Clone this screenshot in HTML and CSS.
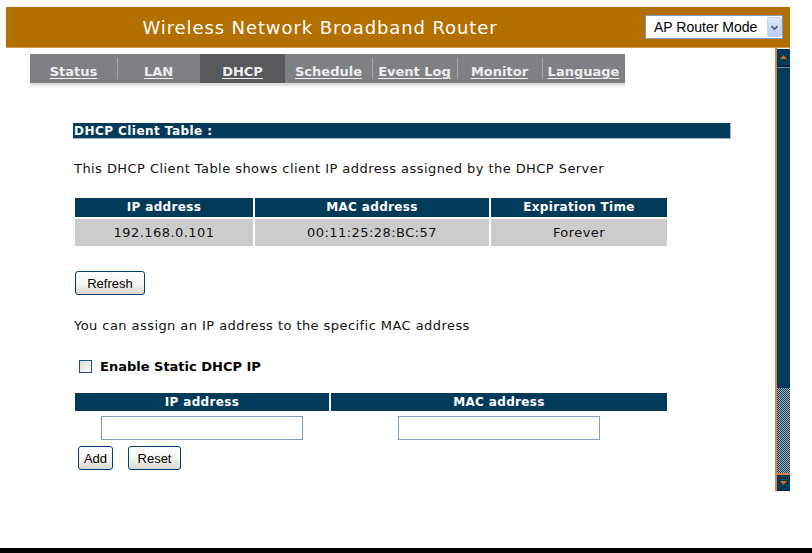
FILE: index.html
```html
<!DOCTYPE html>
<html>
<head>
<meta charset="utf-8">
<title>Wireless Network Broadband Router</title>
<link rel="stylesheet" href="styles.css">
</head>
<body>
<div class="screen">
  <div class="top">
    <div class="header">
      <div class="title">Wireless Network Broadband Router</div>
      <div class="mode">
        <select class="mode-select"><option>AP Router Mode</option></select>
        <span class="mode-arrow"><svg width="15" height="19" viewBox="0 0 15 19"><polyline points="4,8 7.5,11.5 11,8" fill="none" stroke="#4d6185" stroke-width="2"/></svg></span>
      </div>
    </div>
    <div class="frame">
      <div class="content">
        <nav class="tabs">
          <a class="tab w87">Status</a>
          <a class="tab w83">LAN</a>
          <a class="tab w85 active">DHCP</a>
          <a class="tab w87 nosep">Schedule</a>
          <a class="tab w85">Event Log</a>
          <a class="tab w85">Monitor</a>
          <a class="tab w83">Language</a>
        </nav>

        <div class="section">
          <div class="section-bar">DHCP Client Table :</div>
          <p class="desc">This DHCP Client Table shows client IP address assigned by the DHCP Server</p>

          <table class="grid clients">
            <tr class="head">
              <th class="c1">IP address</th>
              <th class="c2">MAC address</th>
              <th class="c3">Expiration Time</th>
            </tr>
            <tr class="data">
              <td>192.168.0.101</td>
              <td>00:11:25:28:BC:57</td>
              <td>Forever</td>
            </tr>
          </table>

          <button class="btn refresh">Refresh</button>

          <p class="desc2">You can assign an IP address to the specific MAC address</p>

          <label class="check-row"><input type="checkbox" class="check"><span>Enable Static DHCP IP</span></label>

          <table class="grid static">
            <tr class="head">
              <th class="s1">IP address</th>
              <th class="s2">MAC address</th>
            </tr>
            <tr class="inputs">
              <td><input type="text" class="field"></td>
              <td><input type="text" class="field"></td>
            </tr>
          </table>

          <div class="actions">
            <button class="btn add">Add</button>
            <button class="btn reset">Reset</button>
          </div>
        </div>
      </div>
      <div class="scrollbar">
        <div class="sb-btn up"><svg width="13" height="15" viewBox="0 0 13 15"><polygon points="3,9 10,9 6.5,5" fill="#e0650c"/></svg></div>
        <div class="sb-thumb"></div>
        <div class="sb-track"></div>
        <div class="sb-btn down"><svg width="13" height="15" viewBox="0 0 13 15"><polygon points="3,6 10,6 6.5,10" fill="#e0650c"/></svg></div>
      </div>
    </div>
  </div>
  <div class="bottom-bar"></div>
</div>
</body>
</html>
```
FILE: styles.css
```css
* { box-sizing: border-box; }
body {
  margin: 0;
  background: #fff;
  font-family: "DejaVu Sans", Verdana, sans-serif;
  color: #000;
}
.screen {
  width: 812px;
  height: 553px;
  display: flex;
  flex-direction: column;
}
.top {
  flex: 1;
  padding: 7px 0 0 6px;
  width: 790px;
}
.header {
  height: 41px;
  background: #b36f00;
  border-bottom: 1px solid #c99a55;
  display: flex;
  align-items: center;
}
.title {
  flex: 1;
  text-align: center;
  color: #fff;
  font-size: 18px;
  letter-spacing: 0.9px;
  padding-top: 1px;
}
.mode {
  width: 156px;
  padding-left: 11px;
  position: relative;
  display: flex;
}
.mode-select {
  appearance: none;
  -webkit-appearance: none;
  width: 138px;
  height: 24px;
  border: 1px solid #7f9db9;
  background: #fff;
  font: 14px "Liberation Sans", Arial, sans-serif;
  color: #000;
  padding: 0 0 0 8px;
  border-radius: 0;
}
.mode-arrow {
  position: absolute;
  right: 8px;
  top: 2px;
  width: 15px;
  height: 20px;
  background: linear-gradient(#dde8fb, #b7cdf5);
  border: 1px solid #c3d3fd;
  border-radius: 2px;
  display: flex;
  align-items: center;
  justify-content: center;
}
.frame {
  display: flex;
  height: 443px;
}
.content {
  flex: 1;
  padding-top: 6px;
}
.tabs {
  margin-left: 24px;
  width: 595px;
  height: 29px;
  display: flex;
  background: #7e8184;
  box-shadow: 0 3px 2px #dcdcdc;
}
.tab {
  height: 29px;
  text-align: center;
  color: #eeeeee;
  font-weight: bold;
  font-size: 13px;
  text-decoration: underline;
  text-underline-offset: 2px;
  padding-top: 10px;
  line-height: 16px;
  background: linear-gradient(#a3a5a8, #a3a5a8) left 4px / 1px 21px no-repeat;
}
.tab:first-child, .tab.nosep { background: none; }
.tab.active { background: #57595b; }
.w87 { width: 87px; }
.w85 { width: 85px; }
.w83 { width: 83px; }

.section {
  margin-left: 67px;
  width: 658px;
}
.section-bar {
  margin-top: 40px;
  height: 16px;
  background: #023b5a;
  border: 1px solid #9fb6c4;
  border-width: 0 1px 1px 0;
  color: #fff;
  font-weight: bold;
  font-size: 12px;
  letter-spacing: 0.45px;
  line-height: 16px;
  padding-left: 1px;
}
.desc, .desc2 {
  margin: 22px 0 0 1px;
  font-size: 13px;
  letter-spacing: 0.44px;
  line-height: 16px;
  color: #111;
}
.grid {
  border-collapse: separate;
  border-spacing: 2px;
}
.clients { margin-top: 19px; }
.grid th {
  background: #023b5a;
  color: #fff;
  font-weight: bold;
  font-size: 12px;
  letter-spacing: 0.35px;
  height: 19px;
  padding: 0;
  line-height: 19px;
  text-align: center;
}
.c1 { width: 178px; }
.c2 { width: 234px; }
.c3 { width: 176px; }
.clients .data td {
  background: #cccccc;
  height: 27px;
  font-size: 13px;
  letter-spacing: 0.45px;
  text-align: center;
  padding: 0;
  color: #111;
}
.btn {
  font: 13px "Liberation Sans", Arial, sans-serif;
  color: #000;
  height: 24px;
  border: 1px solid #003c74;
  border-radius: 3px;
  background: linear-gradient(#ffffff, #f4f4f0 55%, #dcd8ce);
  padding: 0;
}
.refresh {
  display: block;
  width: 70px;
  margin: 23px 0 0 2px;
}
.desc2 { margin-top: 23px; }
.check-row {
  display: flex;
  align-items: center;
  margin: 24px 0 0 6px;
  height: 16px;
  font-weight: bold;
  font-size: 13px;
}
.check {
  appearance: none;
  -webkit-appearance: none;
  width: 13px;
  height: 13px;
  margin: 0 8px 0 0;
  border: 1px solid #1c5180;
  background: linear-gradient(135deg, #dcdcd7, #fbfbf9);
}
.static { margin-top: 17px; }
.static th { height: 18px; line-height: 18px; }
.s1 { width: 254px; }
.s2 { width: 336px; }
.static .inputs td {
  height: 29px;
  padding: 0;
  text-align: center;
  vertical-align: middle;
}
.field {
  display: block;
  margin: 0 auto;
  width: 202px;
  height: 24px;
  border: 1px solid #7f9db9;
  background: #fff;
}
.actions {
  display: flex;
  gap: 15px;
  margin: 2px 0 0 5px;
}
.add { width: 35px; }
.reset { width: 53px; }

.scrollbar {
  width: 15px;
  border-left: 2px solid #d6824a;
  display: flex;
  flex-direction: column;
  padding-top: 1px;
}
.sb-btn {
  height: 17px;
  background: #023b5a;
  display: flex;
  align-items: center;
  justify-content: center;
}
.sb-btn.up { border-bottom: 2px solid #0a1f4a; height: 18px; }
.sb-thumb {
  height: 321px;
  background: #023b5a;
  border-top: 1px solid #6a8aa0;
}
.sb-track {
  height: 85px;
  background-image: repeating-conic-gradient(#12405c 0 25%, #a5b2bb 0 50%);
  background-size: 2px 2px;
}
.sb-btn.down {
  height: 18px;
  border-top: 2px solid #d6824a;
  border-bottom: 1px solid #0a1f4a;
}
.bottom-bar {
  height: 5px;
  background: #000;
}
```
